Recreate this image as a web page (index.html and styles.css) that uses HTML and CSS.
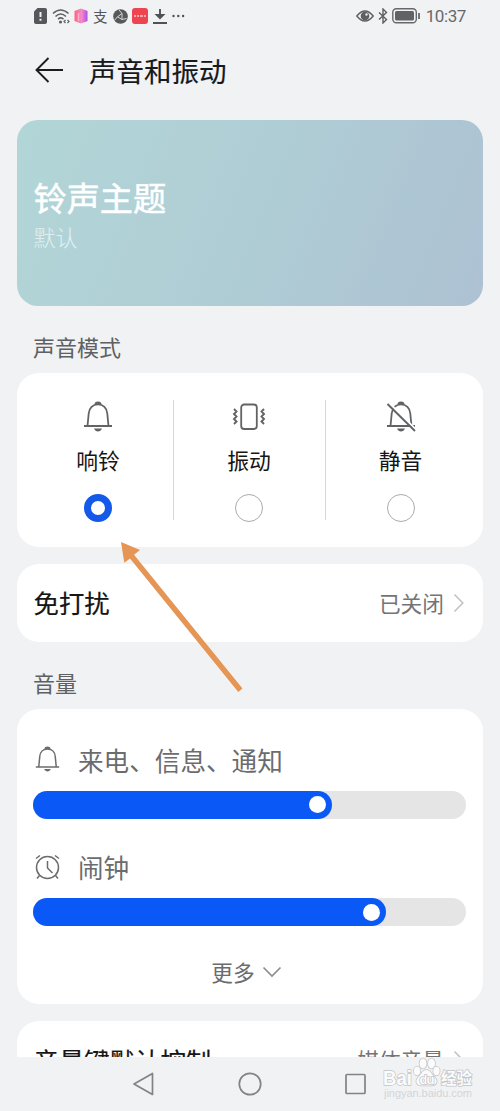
FILE: index.html
```html
<!DOCTYPE html>
<html lang="zh-CN">
<head>
<meta charset="utf-8">
<title>声音和振动</title>
<link rel="stylesheet" href="styles.css">
</head>
<body>
<svg class="defs" width="0" height="0" aria-hidden="true">
  <symbol id="bell" viewBox="0 0 30 32">
    <path d="M4.500 25 5.700 12.500C6 6.800 10 3.400 15 3.400s9 3.400 9.300 9.100L25.500 25M1 25h28" fill="none" stroke="currentColor" stroke-width="1.800"/>
    <path d="M11.500 3.300a3.500 2.900 0 0 1 7 0zM11 27.500h8c-.8 2-2.200 3-4 3s-3.200-1-4-3z" fill="currentColor"/>
  </symbol>
</svg>
<div class="phone">
  <header class="status">
    <div class="status-left">
      <svg width="13" height="16" viewBox="0 0 13 16"><path d="M3.500 0H11a2 2 0 0 1 2 2v12a2 2 0 0 1-2 2H2a2 2 0 0 1-2-2V3.500z" fill="#55575a"/><path d="M6.500 4v5M6.500 10.800v2" stroke="#eee" stroke-width="2"/></svg>
      <svg width="18" height="16" viewBox="0 0 18 16" fill="none" stroke="#606265" stroke-width="1.600"><path d="M1 5.500q7.500-7 15.500 0M3.500 8.500q5.200-5 10.500 0M6 11.200q3-2.500 5.500 0"/><circle cx="8.500" cy="14" r=".8"/><path d="M13.500 12 12 13.500l1.500 1.500M15.500 12l1.500 1.500-1.500 1.500" stroke-width="1.200"/></svg>
      <svg width="14" height="16" viewBox="0 0 14 16"><defs><linearGradient id="pink"><stop stop-color="#ff637f"/><stop offset=".55" stop-color="#f28bc9"/><stop offset="1" stop-color="#b14be5"/></linearGradient></defs><path d="M.5 3 7 .5 13.500 3v10L7 15.500.5 13z" fill="url(#pink)"/><path d="M4.500 5v8" stroke="#ffb3cb" stroke-width="1.500"/></svg>
      <span class="pay">支</span>
      <svg width="15" height="15" viewBox="0 0 15 15"><circle cx="7.500" cy="7.500" r="7.300" fill="#56585b"/><path d="M9 4.500v6L4.500 7.800zM9 4.500 6 1M9 10.500l4.500-1M4.500 7.800l-3 3.500" fill="none" stroke="#d5d7d9"/></svg>
      <svg width="16" height="16" viewBox="0 0 16 16"><rect width="16" height="16" rx="3" fill="#ed4650"/><path d="M2 8h2m1 0h2m1 0h3m1 0h2" stroke="#ffc9cb" stroke-width="1.300"/></svg>
      <svg width="14" height="16" viewBox="0 0 14 16" stroke="#505255" fill="none"><path d="M7 1v9M0 15h14" stroke-width="1.900"/><path d="M1.500 6h11L7 11.500z" fill="#505255" stroke="none"/></svg>
      <svg width="13" height="4" viewBox="0 0 13 4" fill="#505255"><circle cx="1.500" cy="2" r="1.200"/><circle cx="6.300" cy="2" r="1.200"/><circle cx="11.100" cy="2" r="1.200"/></svg>
    </div>
    <div class="status-right">
      <svg width="18" height="12" viewBox="0 0 18 12"><path d="M.8 6Q9-4 17.200 6 9 16 .8 6z" fill="none" stroke="#5d5f62" stroke-width="1.400"/><circle cx="9" cy="6" r="4.300" fill="#5d5f62"/><circle cx="10.500" cy="4.500" r="1.200" fill="#e9eaec"/></svg>
      <svg width="10" height="16" viewBox="0 0 10 16" fill="none" stroke="#5d5f62" stroke-width="1.400"><path d="M1 4.500 8.500 11.500 5 15V1l3.500 3.500L1 11.500"/></svg>
      <svg width="29" height="16" viewBox="0 0 29 16"><rect x=".8" y=".8" width="23.500" height="14" rx="3.500" fill="none" stroke="#66686b" stroke-width="1.400"/><rect x="3" y="3" width="19" height="9.600" rx="1.500" fill="#606265"/><path d="M27 5v6" stroke="#66686b" stroke-width="1.800"/></svg>
      <span class="time">10:37</span>
    </div>
  </header>

  <div class="titlebar">
    <svg width="30" height="28" viewBox="0 0 30 28" fill="none" stroke="#1c1d1f" stroke-width="1.900"><path d="M2.500 14H29M14.500 2l-12 12 12 12"/></svg>
    <h1 class="title">声音和振动</h1>
  </div>

  <main class="content">
    <section class="hero">
      <div class="hero-title">铃声主题</div>
      <div class="hero-sub">默认</div>
    </section>

    <h2 class="label">声音模式</h2>
    <section class="card modes">
      <div class="mode">
        <svg class="mode-icon" width="30" height="32"><use href="#bell"/></svg>
        <span class="mode-name">响铃</span>
        <span class="radio radio-on"></span>
      </div>
      <div class="mode">
        <svg class="mode-icon" width="34" height="32" viewBox="0 0 34 32" fill="none" stroke="currentColor" stroke-width="1.800"><rect x="9.200" y="3.500" width="15.600" height="24.500" rx="3"/><path d="m2 8 2.500 2.500L2 13l2.500 2.500L2 18l2.500 2.500L2 23M32 8l-2.500 2.500L32 13l-2.500 2.500L32 18l-2.500 2.500L32 23" stroke-width="1.900"/></svg>
        <span class="mode-name">振动</span>
        <span class="radio"></span>
      </div>
      <div class="mode">
        <svg class="mode-icon" width="30" height="32" viewBox="0 0 30 32"><use href="#bell" width="30" height="32"/><path d="m2.800 1.500 27.500 27.500" stroke="#fff" stroke-width="2"/><path d="m1.500 3 27.500 27" stroke="currentColor" stroke-width="1.900"/></svg>
        <span class="mode-name">静音</span>
        <span class="radio"></span>
      </div>
    </section>

    <section class="card row dnd">
      <span class="row-name">免打扰</span>
      <span class="row-value">已关闭</span>
      <svg class="chevron" width="12" height="20" viewBox="0 0 12 20"><path d="m1.500 1.500 8.300 8.500-8.300 8.500"/></svg>
    </section>

    <h2 class="label label-volume">音量</h2>
    <section class="card volumes">
      <div class="volume-head">
        <svg width="25" height="27"><use href="#bell"/></svg>
        <span>来电、信息、通知</span>
      </div>
      <div class="slider"><div class="fill" style="width:298.5px"><span class="knob"></span></div></div>
      <div class="volume-head">
        <svg width="25" height="27" viewBox="0 0 25 27" fill="none" stroke="currentColor" stroke-width="1.500"><circle cx="12.500" cy="13.500" r="11"/><path d="M12.500 7v7l5 5M1 4.500l4-3M24 4.500l-4-3M4.500 21.500 2 24.500M20.500 21.500l2.500 3"/></svg>
        <span>闹钟</span>
      </div>
      <div class="slider"><div class="fill" style="width:352.5px"><span class="knob"></span></div></div>
      <div class="more"><span>更多</span><svg width="20" height="12" viewBox="0 0 20 12"><path d="m1.500 1.500 8.500 8.500 8.500-8.500" fill="none" stroke="#8b8c8e" stroke-width="1.600"/></svg></div>
    </section>

    <section class="card row keys">
      <span class="row-name">音量键默认控制</span>
      <span class="row-value">媒体音量</span>
      <svg class="chevron" width="12" height="20" viewBox="0 0 12 20"><path d="m1.500 1.500 8.300 8.500-8.300 8.500"/></svg>
    </section>
  </main>

  <nav class="nav">
    <svg width="24" height="26" viewBox="0 0 24 26"><path d="M20.500 2.500v21L2 13z"/></svg>
    <svg width="24" height="26" viewBox="0 0 24 26"><circle cx="12" cy="13" r="10.700"/></svg>
    <svg width="24" height="26" viewBox="0 0 24 26"><rect x="2" y="3.500" width="19" height="19" rx="1"/></svg>
  </nav>

  <svg class="pointer" width="124" height="154" viewBox="0 0 124 154"><path d="M123.500 148.500 119.300 152 11 18.500l-5.700 4.200L2 2l19 8-6 4.800z" fill="#e59554"/></svg>

  <svg class="watermark" width="96" height="48" viewBox="0 0 96 48">
    <g class="wm-mark">
      <text class="wm-brand" x="3" y="28.500" textLength="29" lengthAdjust="spacingAndGlyphs">Bai</text>
      <ellipse cx="37" cy="15" rx="3.200" ry="4.200"/><ellipse cx="43" cy="7.500" rx="3.500" ry="5"/><ellipse cx="51.500" cy="7.500" rx="3.500" ry="5"/><ellipse cx="56.500" cy="15" rx="3.200" ry="4.200"/>
      <path d="M46.500 14c4 0 5 4 8 7 4 4 2 8.500-3 8.500h-10c-5 0-7-4.500-3-8.500 3-3 4-7 8-7z"/>
      <text class="wm-du" x="39.500" y="27.500" textLength="15">du</text>
      <text class="wm-cn" x="61" y="27.500">经验</text>
    </g>
    <text class="wm-url" x="4" y="41" textLength="88">jingyan.baidu.com</text>
  </svg>
</div>
</body>
</html>
```
FILE: styles.css
```css
* { box-sizing: border-box; }
body {
  margin: 0;
  background: #f1f2f4;
  font-family: "Noto Sans CJK SC", sans-serif;
}
svg { display: block; flex: none; }
.defs { position: absolute; }
.phone {
  position: relative;
  display: flex;
  flex-direction: column;
  width: 500px;
  height: 1111px;
  overflow: hidden;
}

.status {
  display: flex;
  justify-content: space-between;
  align-items: center;
  height: 32px;
  padding: 0 34px;
}
.status-left { display: flex; align-items: center; gap: 4.700px; }
.pay { width: 15px; font-size: 14.500px; line-height: 16px; color: #55575a; }
.status-right { display: flex; align-items: center; gap: 4px; }
.time {
  margin-left: 1px;
  font: 17px/20px Roboto, sans-serif;
  letter-spacing: -.4px;
  color: #66686b;
}

.titlebar {
  display: flex;
  align-items: center;
  gap: 25px;
  height: 76px;
  padding-left: 34px;
}
.title {
  margin: 0;
  font-size: 27.5px;
  line-height: 38px;
  font-weight: 400;
  color: #18191b;
  -webkit-text-stroke: .15px #18191b;
}

.content {
  height: 949px;
  padding: 12px 17px 0;
  overflow: hidden;
}
.hero {
  display: flex;
  flex-direction: column;
  height: 186px;
  padding: 56px 16.5px 0;
  border-radius: 21px;
  background: linear-gradient(112deg, #b2d6d7 0%, #afcdd5 50%, #adc1d2 100%);
}
.hero-title {
  font-size: 33.2px;
  line-height: 42px;
  color: #fff;
  -webkit-text-stroke: .5px #fff;
}
.hero-sub { font-size: 22px; line-height: 37px; color: #e0f0f1; font-weight: 300; }

.label {
  margin: 0;
  height: 67px;
  padding-left: 16px;
  font-size: 22px;
  line-height: 80px;
  font-weight: 400;
  color: #5f6062;
}
.label-volume { line-height: 81px; }

.card { background: #fff; border-radius: 22px; }
.modes {
  display: grid;
  grid-template-columns: 152px 152px 151px;
  height: 174px;
  padding: 27px 4px;
}
.mode {
  display: flex;
  flex-direction: column;
  align-items: center;
  height: 120px;
}
.mode:first-child { padding-left: 2px; }
.mode + .mode { padding-right: 1px; border-left: 1px solid #d8d8d8; }
.mode-icon { margin-top: 1px; color: #626365; }
.mode-name {
  margin-top: 9px;
  font-size: 21.8px;
  line-height: 36px;
  color: #151515;
}
.radio {
  flex: none;
  width: 28px;
  height: 28px;
  margin-top: 16px;
  border: 1.5px solid #aaa;
  border-radius: 50%;
}
.radio-on { border: 7px solid #1459e8; }

.row { display: flex; align-items: center; padding: 0 18px 0 16.500px; }
.dnd { height: 77.5px; margin-top: 17px; }
.row-name {
  flex: 1;
  font-size: 25.4px;
  color: #151515;
  -webkit-text-stroke: .2px #151515;
}
.row-value { font-size: 21.7px; color: #737476; }
.dnd .row-name, .dnd .row-value { padding-bottom: 1px; }
.chevron { margin-left: 9px; }
.chevron path { fill: none; stroke: #c2c3c5; stroke-width: 1.6; }

.volumes { height: 295px; padding: 33px 17px 0 16px; }
.volume-head {
  display: flex;
  align-items: center;
  gap: 18.5px;
  height: 36px;
  padding-left: 1.5px;
  font-size: 25.6px;
  line-height: 36px;
  color: #6b6c6e;
}
.slider {
  height: 28px;
  margin: 13px 0 30.5px;
  border-radius: 14px;
  background: #e5e5e5;
}
.fill {
  display: flex;
  align-items: center;
  justify-content: flex-end;
  height: 100%;
  padding-right: 6px;
  border-radius: 14px;
  background: #0a59f7;
}
.knob { width: 17px; height: 17px; border-radius: 50%; background: #fff; }
.more {
  display: flex;
  justify-content: center;
  align-items: center;
  gap: 7px;
  margin-top: -3px;
  padding-right: 6px;
  font-size: 21.7px;
  line-height: 36px;
  color: #6b6c6e;
}
.keys { height: 78px; margin-top: 17px; }

.nav {
  display: flex;
  justify-content: center;
  align-items: center;
  gap: 82px;
  height: 54px;
  background: #f1f2f4;
}
.nav path, .nav circle, .nav rect { fill: none; stroke: #828385; stroke-width: 1.7; stroke-linejoin: round; }

.pointer { position: absolute; left: 119px; top: 540px; }
.watermark { position: absolute; left: 380px; top: 1056px; }
.wm-mark { fill: #fbfbfc; stroke: #c2c4c7; stroke-width: 1.5; paint-order: stroke; }
.wm-brand { font: bold 21px "Liberation Sans", sans-serif; }
.wm-du { font: bold 13px "Liberation Sans", sans-serif; }
.wm-cn { font: bold 15.5px "Noto Sans CJK SC", sans-serif; }
.wm-url { font: 11px "Liberation Sans", sans-serif; fill: #d3d5d8; }
```
